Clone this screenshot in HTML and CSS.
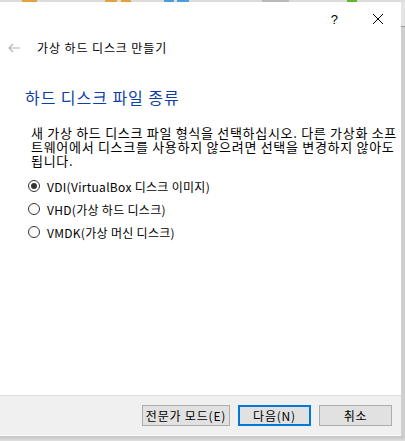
FILE: index.html
```html
<!DOCTYPE html>
<html>
<head>
    <meta charset="utf-8" />
    <title>가상 하드 디스크 만들기</title>
    <link rel="stylesheet" href="styles.css">
</head>
<body>
    <div class="behind">
        <span class="blob orange b1"></span>
        <span class="blob orange b2"></span>
        <span class="blob orange b3"></span>
        <span class="blob blue b4"></span>
        <span class="blob blue b5"></span>
        <span class="blob grey b6"></span>
        <span class="blob green b7"></span>
    </div>
    <div class="stage">
        <div class="dialog">
            <div class="caption">
                <span class="help">?</span>
                <svg class="close" width="12" height="12" viewBox="0 0 12 12">
                    <path d="M1 1L11 11M11 1L1 11" stroke="#000" stroke-width="1" fill="none" />
                </svg>
            </div>
            <div class="nav">
                <svg class="back" width="12" height="10" viewBox="0 0 12 10">
                    <path d="M5 1L1 5L5 9M1 5H12" stroke="#b4b4b4" stroke-width="1.2" fill="none" />
                </svg>
                <span class="nav-title">가상 하드 디스크 만들기</span>
            </div>
            <div class="page">
                <h1 class="heading">하드 디스크 파일 종류</h1>
                <p class="desc">새 가상 하드 디스크 파일 형식을 선택하십시오. 다른 가상화 소프트웨어에서 디스크를 사용하지 않으려면 선택을 변경하지 않아도 됩니다.</p>
                <div class="choices">
                    <label class="choice"><span class="radio checked"></span>VDI(VirtualBox 디스크 이미지)</label>
                    <label class="choice"><span class="radio"></span>VHD(가상 하드 디스크)</label>
                    <label class="choice"><span class="radio"></span>VMDK(가상 머신 디스크)</label>
                </div>
            </div>
            <div class="footer">
                <button class="btn">전문가 모드(E)</button>
                <button class="btn default">다음(N)</button>
                <button class="btn">취소</button>
            </div>
        </div>
        <div class="side"></div>
    </div>
    <div class="shadow"></div>
</body>
</html>
```

FILE: styles.css
```css
* {
    padding: 0;
    margin: 0;
    box-sizing: border-box;
}

body {
    width: 405px;
    height: 441px;
    overflow: hidden;
    background: #d6d6d6;
    font-family: "Noto Sans CJK KR", "Noto Sans", sans-serif;
    font-size: 12px;
    color: #000;
}

.behind {
    height: 2px;
    display: flex;
    background: #dcdcdc;
}

    .behind .blob {
        height: 2px;
        display: block;
    }

.orange { background: #e5a13a; }
.blue { background: #4a9ee0; }
.grey { background: #b9b9b9; }
.green { background: #5cb82d; }

.b1 { margin-left: 22px; width: 15px; }
.b2 { margin-left: 68px; width: 12px; }
.b3 { margin-left: 4px; width: 10px; }
.b4 { margin-left: 33px; width: 10px; }
.b5 { margin-left: 3px; width: 12px; }
.b6 { margin-left: 73px; width: 27px; }
.b7 { margin-left: 58px; width: 10px; }

.stage {
    display: flex;
    height: 434px;
}

.dialog {
    width: 401px;
    height: 434px;
    background: #fff;
    display: flex;
    flex-direction: column;
}

.side {
    flex: 1;
    background: linear-gradient(#e4e4e4 0, #e4e4e4 24px, #9a9a9a 24px, #9a9a9a 25px, #cfcfcf 25px);
}

.caption {
    height: 32px;
    display: flex;
    align-items: center;
    justify-content: flex-end;
    padding-right: 17px;
}

    .caption .help {
        font-family: "Liberation Sans", sans-serif;
        font-size: 13px;
        margin-right: 34px;
        margin-top: 2px;
    }

    .caption .close {
        margin-top: 2px;
    }

.nav {
    height: 28px;
    display: flex;
    align-items: center;
    padding-left: 8px;
}

    .nav .back {
        margin-right: 17px;
    }

.nav-title {
    font-size: 12px;
    line-height: 16px;
    letter-spacing: 0.9px;
}

.page {
    flex: 1;
    padding: 25px 0 0 25px;
}

.heading {
    font-size: 16px;
    font-weight: normal;
    color: #0b3fa6;
    line-height: 20px;
    letter-spacing: 0.95px;
}

.desc {
    margin: 19px 0 0 6px;
    line-height: 14px;
    font-size: 13px;
    letter-spacing: 0.7px;
}

.choices {
    margin-top: 10px;
    display: flex;
    flex-direction: column;
    gap: 7px;
}

.choice {
    display: flex;
    align-items: center;
    height: 16px;
    font-size: 12px;
    letter-spacing: 0.3px;
}

.radio {
    width: 12px;
    height: 12px;
    border: 1px solid #333;
    border-radius: 50%;
    margin: 0 7px 0 3px;
    display: flex;
    align-items: center;
    justify-content: center;
}

    .radio.checked::after {
        content: "";
        width: 6px;
        height: 6px;
        border-radius: 50%;
        background: #333;
    }

.footer {
    height: 41px;
    background: #f0f0f0;
    border-top: 1px solid #dfdfdf;
    border-bottom: 1px solid #fff;
    display: flex;
    align-items: center;
    justify-content: flex-end;
    gap: 8px;
    padding-right: 9px;
}

.btn {
    height: 21px;
    width: 73px;
    background: #e1e1e1;
    border: 1px solid #adadad;
    font-family: "Noto Sans CJK KR", sans-serif;
    font-size: 12px;
    line-height: 17px;
    letter-spacing: 0.8px;
}

    .btn:first-child {
        width: 88px;
    }

    .btn.default {
        border: 2px solid #0078d7;
    }

.shadow {
    height: 5px;
    background: linear-gradient(#c4c4c4, #e0e0e0);
}
```
